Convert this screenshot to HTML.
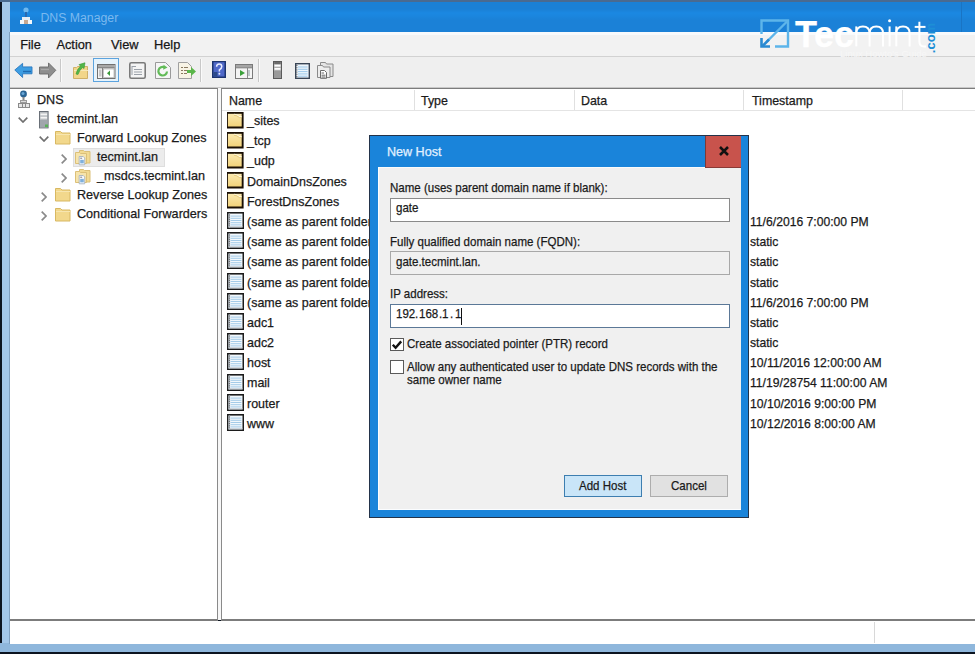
<!DOCTYPE html>
<html><head><meta charset="utf-8">
<style>
*{margin:0;padding:0;box-sizing:border-box}
html,body{width:975px;height:654px;overflow:hidden;background:#0c1420}
body{position:relative;font-family:"Liberation Sans",sans-serif;color:#000}
.a{position:absolute;display:block}
.t{position:absolute;white-space:nowrap;-webkit-text-stroke:0.25px currentColor}
</style></head><body>
<div class="a" style="left:2px;top:0;width:8px;height:652px;background:#a3c7e9"></div><div class="a" style="left:0;top:643px;width:975px;height:9px;background:#8fb7dc"></div><div class="a" style="left:9px;top:32px;width:1px;height:612px;background:#7f9fbf"></div><div class="a" style="left:0;top:0;width:975px;height:2px;background:#4a6a90"></div><div class="a" style="left:10px;top:2px;width:965px;height:30px;background:linear-gradient(#1b80d5 0px,#1b80d5 7px,#1b88e2 11px,#1b86de 14px,#1b81d7 18px,#1b81d7 30px)"></div><div class="a" style="left:961px;top:2px;width:1px;height:30px;background:#1974c4"></div><svg class="a" style="left:18px;top:6px" width="16" height="20" viewBox="0 0 16 20">
<circle cx="8" cy="4" r="2.6" fill="#6fb8ee"/>
<rect x="7" y="6" width="2" height="5" fill="#2a6ab0"/>
<rect x="4" y="11" width="8" height="3" fill="#e8eef4"/>
<rect x="2" y="14" width="12" height="4" fill="#f4f8fb"/>
<rect x="6" y="14" width="4" height="4" fill="#c8a890"/>
</svg><div class="t " style="left:40.4px;top:9.74px;font-size:12.3px;line-height:16px;color:#7ab9ef;-webkit-text-stroke:0">DNS Manager</div>
<div class="a" style="left:10px;top:32px;width:965px;height:25px;background:#f2f2f2"></div><div class="a" style="left:10px;top:32px;width:965px;height:3px;background:#f8fafc"></div><div class="a" style="left:10px;top:56px;width:965px;height:1px;background:#d2d2d2"></div><div class="t " style="left:20.2px;top:36.86px;font-size:12.8px;line-height:16px;color:#161616;">File</div>
<div class="t " style="left:56.4px;top:36.86px;font-size:12.8px;line-height:16px;color:#161616;">Action</div>
<div class="t " style="left:111px;top:36.86px;font-size:12.8px;line-height:16px;color:#161616;">View</div>
<div class="t " style="left:154px;top:36.86px;font-size:12.8px;line-height:16px;color:#161616;">Help</div>
<div class="a" style="left:10px;top:57px;width:965px;height:31px;background:#efefef"></div><div class="a" style="left:60px;top:59px;width:1px;height:23px;background:#c8c8c8"></div><div class="a" style="left:61px;top:59px;width:1px;height:23px;background:#fafafa"></div><div class="a" style="left:200px;top:59px;width:1px;height:23px;background:#c8c8c8"></div><div class="a" style="left:201px;top:59px;width:1px;height:23px;background:#fafafa"></div><div class="a" style="left:258px;top:59px;width:1px;height:23px;background:#c8c8c8"></div><div class="a" style="left:259px;top:59px;width:1px;height:23px;background:#fafafa"></div><div class="a" style="left:93px;top:58px;width:26px;height:24px;background:#e6f3fc;border:1.6px solid #5ca3de"></div><svg class="a" style="left:14px;top:62px" width="19" height="17" viewBox="0 0 19 17">
<path d="M0.8 8 L8.6 1.4 V4.9 H18 V11.8 H8.6 V15.5 Z" fill="#3d9de2" stroke="#2a78c0" stroke-width="0.9" stroke-linejoin="round"/>
<path d="M9 9.5 H17" stroke="#1f6ab0" stroke-width="1.4"/>
</svg><svg class="a" style="left:39px;top:62px" width="19" height="17" viewBox="0 0 19 17">
<path d="M16.8 8.3 L9.5 0.9 V5 H0.5 V12 H9.5 V16 Z" fill="#8e8e8e" stroke="#6a6a6a" stroke-width="0.9" stroke-linejoin="round"/>
<path d="M2 7.5 H10" stroke="#a8a8a8" stroke-width="1.2"/>
</svg><svg class="a" style="left:73px;top:62px" width="16" height="17" viewBox="0 0 16 17">
<path d="M0.5 5.5 h3 l1 -1 h10 v12 h-14z" fill="#f2d68a" stroke="#cfb068"/>
<path d="M1 8.5 h14" stroke="#f8e8b8"/>
<path d="M3 12 Q4 7 7.5 4.2 L6 2.6 L12 0.8 L11 6.6 L9.6 5.4 Q6.5 8 5 12.5z" fill="#52b548" stroke="#3a9a34" stroke-width="0.6"/>
</svg><svg class="a" style="left:97px;top:64px" width="19" height="15" viewBox="0 0 19 15">
<rect x="0.5" y="0.5" width="17.5" height="14" fill="#f4f4f4" stroke="#707070"/>
<rect x="1" y="1" width="16.5" height="2.6" fill="#a8a8a8"/>
<path d="M1 3.8 h16.5" stroke="#707070"/>
<path d="M5.5 4 v10" stroke="#808080"/>
<rect x="2" y="5.5" width="2.5" height="7" fill="#c8c8c8"/>
<rect x="6.5" y="5" width="10.5" height="8.5" fill="#fff" stroke="#a0a0a0" stroke-width="0.6"/>
<path d="M13 6.5 L10 9.2 L13 12z" fill="#3a9a3a"/>
</svg><svg class="a" style="left:129px;top:62px" width="17" height="17" viewBox="0 0 17 17">
<rect x="0.8" y="0.8" width="15.4" height="15.4" rx="1.5" fill="#f4f4f4" stroke="#7a7a7a" stroke-width="1.6"/>
<path d="M3 4.5 h4 M5 7.5 h8 M5 10 h8 M5 12.5 h8" stroke="#9aa0a8" stroke-width="1.2"/>
<path d="M3 4 v9" stroke="#9aa0a8"/>
</svg><svg class="a" style="left:155px;top:62px" width="16" height="17" viewBox="0 0 16 17">
<path d="M0.5 0.5 h10 l5 5 v11 h-15z" fill="#f6f6f6" stroke="#9a9a9a"/>
<path d="M12 9.5 A4.3 4.3 0 1 1 9.5 5.3" fill="none" stroke="#62bb58" stroke-width="2.2"/>
<path d="M8.5 2.8 L12.5 5.6 L8.2 7.8z" fill="#62bb58"/>
</svg><svg class="a" style="left:178px;top:62px" width="18" height="17" viewBox="0 0 18 17">
<path d="M0.5 0.5 h9 l4 4 v12 h-13z" fill="#f8f4e6" stroke="#a0a0a0"/>
<path d="M3 5.5 h2 M6 5.5 h4 M3 8.5 h2 M6 8.5 h4 M3 11.5 h2 M6 11.5 h3" stroke="#8a7a60" stroke-width="1.2"/>
<path d="M9 8 h4 v-3 l5 4.5 l-5 4.5 v-3 h-4z" fill="#5ab64a"/>
</svg><svg class="a" style="left:212px;top:61px" width="14" height="18" viewBox="0 0 14 18">
<rect x="0" y="0" width="14" height="17" fill="#1c3470"/>
<rect x="1.5" y="1.2" width="11" height="14.3" fill="#4f68c8"/>
<rect x="1.5" y="11" width="4" height="4.5" fill="#2c4a8a"/>
<path d="M4.6 5.8 Q4.6 3 7.2 3 Q9.8 3 9.8 5.6 Q9.8 7.4 7.4 8.8 V10.6" fill="none" stroke="#e8ecff" stroke-width="1.5"/>
<circle cx="7.4" cy="12.8" r="1" fill="#e8ecff"/>
</svg><svg class="a" style="left:235px;top:64px" width="18" height="15" viewBox="0 0 18 15">
<rect x="0.5" y="0.5" width="17" height="14" fill="#f4f4f4" stroke="#7a7a7a"/>
<rect x="1" y="1" width="16" height="2.6" fill="#a6a6a6"/>
<path d="M1 3.8 h16" stroke="#7a7a7a"/>
<path d="M12.5 4 v10" stroke="#8a8a8a"/>
<path d="M5 6 L10 9 L5 12z" fill="#3aa03a"/>
<path d="M14 6 v6" stroke="#9aa" stroke-width="1.2"/>
</svg><svg class="a" style="left:273px;top:61px" width="9" height="18" viewBox="0 0 9 18">
<rect x="0.5" y="0.5" width="8" height="17" fill="#b0b0b0" stroke="#5a5a5a"/>
<rect x="1.2" y="1.2" width="6.6" height="1.6" fill="#5a5a5a"/>
<rect x="1.5" y="3.8" width="6" height="1.8" fill="#fff"/>
<rect x="1.5" y="7" width="6" height="1.8" fill="#fff"/>
<rect x="1" y="10" width="7" height="7" fill="#9a9a9a"/>
</svg><svg class="a" style="left:294.5px;top:62.5px" width="15" height="16" viewBox="0 0 15 16">
<rect x="0" y="0" width="15" height="16" fill="#3a4656"/>
<rect x="1.4" y="1.4" width="12.2" height="13.2" fill="#eef6fc"/>
<rect x="3" y="3.5" width="9.5" height="1" fill="#9cc8ea"/>
<rect x="3" y="5.8" width="9.5" height="1" fill="#9cc8ea"/>
<rect x="3" y="8.1" width="9.5" height="1" fill="#9cc8ea"/>
<rect x="3" y="10.4" width="9.5" height="1" fill="#9cc8ea"/>
<rect x="3" y="12.7" width="9.5" height="1" fill="#9cc8ea"/>
<path d="M1.9 2 v12" stroke="#444" stroke-width="0.9" stroke-dasharray="1 1.2"/>
</svg><svg class="a" style="left:317px;top:62px" width="17" height="17" viewBox="0 0 17 17">
<path d="M3.5 0.5 h5 l1 1.5 h6.5 v12.5 h-12.5z" fill="#e4e4e4" stroke="#8a8a8a"/>
<path d="M0.5 3.5 h5 l1 1.5 h6.5 v10.5 h-12.5z" fill="#ededed" stroke="#8a8a8a"/>
<path d="M3.5 8.5 h4 l2 2 v5.8 h-6z" fill="#fff" stroke="#6a6a6a"/>
<path d="M4.5 11 h2.5 M4.5 13.2 h4 M4.5 15 h4" stroke="#555" stroke-width="0.9"/>
</svg><div class="a" style="left:10px;top:87px;width:965px;height:1px;background:#c8c8c8"></div><div class="a" style="left:10px;top:88px;width:965px;height:532px;background:#f7f7f7"></div><div class="a" style="left:10px;top:88px;width:208px;height:533px;background:#fff;border-top:1.5px solid #7c7c7c;border-right:1.5px solid #8a8a8a;border-bottom:2px solid #7c7c7c"></div><div class="a" style="left:220.5px;top:88px;width:755px;height:533px;background:#fff;border-top:1.5px solid #7c7c7c;border-left:1.5px solid #8a8a8a;border-bottom:2px solid #7c7c7c"></div><div class="a" style="left:73px;top:147.5px;width:92px;height:19px;background:#ececec;border:1px solid #dedede"></div><svg class="a" style="left:17px;top:90px" width="14" height="19" viewBox="0 0 14 19">
<circle cx="6.5" cy="4" r="3.4" fill="#2a6494"/>
<circle cx="6" cy="3.4" r="1.5" fill="#6aa8d8"/>
<rect x="5.5" y="7" width="2" height="3" fill="#888"/>
<rect x="3" y="10" width="7" height="3" fill="#9a9a9a"/>
<rect x="4" y="11" width="5" height="1" fill="#ddd"/>
<rect x="1" y="13" width="12" height="5" fill="#8a8a8a"/>
<rect x="2" y="14" width="10" height="3" fill="#e6e6e6"/>
<path d="M5.5 14 v3 M8.5 14 v3" stroke="#8a8a8a"/>
</svg><svg class="a" style="left:18px;top:116.5px" width="10" height="6" viewBox="0 0 10 6"><path d="M0.7 0.7 L5 5 L9.3 0.7" fill="none" stroke="#707070" stroke-width="1.7"/></svg><svg class="a" style="left:39px;top:110.5px" width="10" height="18" viewBox="0 0 10 18">
<rect x="0.5" y="0.5" width="8.6" height="16.4" fill="#b8bcc0" stroke="#6a7078"/>
<rect x="1.5" y="2.5" width="6.6" height="1.8" fill="#f4f4f4"/>
<rect x="1.5" y="5.8" width="6.6" height="1.8" fill="#f4f4f4"/>
<rect x="1" y="9" width="7.6" height="7.4" fill="#a0a6ac"/>
<rect x="6" y="13.5" width="3" height="2.6" fill="#58b058"/>
</svg><svg class="a" style="left:38.5px;top:136px" width="10" height="6" viewBox="0 0 10 6"><path d="M0.7 0.7 L5 5 L9.3 0.7" fill="none" stroke="#707070" stroke-width="1.7"/></svg><svg class="a" style="left:55px;top:131.4px" width="16" height="14" viewBox="0 0 16 14">
<path d="M0.5 0.5 h5 l1.5 1.5 h8 v11 h-14.5z" fill="#f2d88c" stroke="#d8b862" stroke-width="1"/>
<path d="M1 3.5 h14" stroke="#f7e6b0" stroke-width="1"/>
</svg><svg class="a" style="left:60.5px;top:154px" width="6" height="10" viewBox="0 0 6 10"><path d="M0.7 0.7 L5 5 L0.7 9.3" fill="none" stroke="#8a8a8a" stroke-width="1.7"/></svg><svg class="a" style="left:75px;top:150px" width="16" height="16" viewBox="0 0 16 16">
<path d="M4.5 0.5 h4 l1 1 h5.5 v11.5 h-10.5z" fill="#f2da92" stroke="#dcc078"/>
<path d="M0.5 2.5 h4 l1 1 h6 v10 h-11z" fill="#f6e4ac" stroke="#dcc078"/>
<path d="M4.2 6.5 h4 l1.5 1.5 v6.8 h-5.5z" fill="#fff" stroke="#9aaabb" stroke-width="0.8"/>
<rect x="5.2" y="9.8" width="3.6" height="3.6" fill="#7fb0dc"/>
<path d="M5.2 8.2 h2" stroke="#556" stroke-width="0.8"/>
</svg><svg class="a" style="left:60.5px;top:173px" width="6" height="10" viewBox="0 0 6 10"><path d="M0.7 0.7 L5 5 L0.7 9.3" fill="none" stroke="#8a8a8a" stroke-width="1.7"/></svg><svg class="a" style="left:75px;top:169px" width="16" height="16" viewBox="0 0 16 16">
<path d="M4.5 0.5 h4 l1 1 h5.5 v11.5 h-10.5z" fill="#f2da92" stroke="#dcc078"/>
<path d="M0.5 2.5 h4 l1 1 h6 v10 h-11z" fill="#f6e4ac" stroke="#dcc078"/>
<path d="M4.2 6.5 h4 l1.5 1.5 v6.8 h-5.5z" fill="#fff" stroke="#9aaabb" stroke-width="0.8"/>
<rect x="5.2" y="9.8" width="3.6" height="3.6" fill="#7fb0dc"/>
<path d="M5.2 8.2 h2" stroke="#556" stroke-width="0.8"/>
</svg><svg class="a" style="left:40.5px;top:192px" width="6" height="10" viewBox="0 0 6 10"><path d="M0.7 0.7 L5 5 L0.7 9.3" fill="none" stroke="#8a8a8a" stroke-width="1.7"/></svg><svg class="a" style="left:55px;top:188.4px" width="16" height="14" viewBox="0 0 16 14">
<path d="M0.5 0.5 h5 l1.5 1.5 h8 v11 h-14.5z" fill="#f2d88c" stroke="#d8b862" stroke-width="1"/>
<path d="M1 3.5 h14" stroke="#f7e6b0" stroke-width="1"/>
</svg><svg class="a" style="left:40.5px;top:211px" width="6" height="10" viewBox="0 0 6 10"><path d="M0.7 0.7 L5 5 L0.7 9.3" fill="none" stroke="#8a8a8a" stroke-width="1.7"/></svg><svg class="a" style="left:55px;top:207.5px" width="16" height="14" viewBox="0 0 16 14">
<path d="M0.5 0.5 h5 l1.5 1.5 h8 v11 h-14.5z" fill="#f2d88c" stroke="#d8b862" stroke-width="1"/>
<path d="M1 3.5 h14" stroke="#f7e6b0" stroke-width="1"/>
</svg><div class="t " style="left:37.3px;top:91.60px;font-size:13px;line-height:16px;color:#1a1a1a;transform:scaleX(0.97);transform-origin:0 0">DNS</div>
<div class="t " style="left:57.2px;top:110.68px;font-size:13px;line-height:16px;color:#1a1a1a;transform:scaleX(0.97);transform-origin:0 0">tecmint.lan</div>
<div class="t " style="left:77.1px;top:129.76px;font-size:13px;line-height:16px;color:#1a1a1a;transform:scaleX(0.97);transform-origin:0 0">Forward Lookup Zones</div>
<div class="t " style="left:97.2px;top:148.84px;font-size:13px;line-height:16px;color:#1a1a1a;transform:scaleX(0.97);transform-origin:0 0">tecmint.lan</div>
<div class="t " style="left:97.2px;top:167.92px;font-size:13px;line-height:16px;color:#1a1a1a;transform:scaleX(0.97);transform-origin:0 0">_msdcs.tecmint.lan</div>
<div class="t " style="left:77.1px;top:187.00px;font-size:13px;line-height:16px;color:#1a1a1a;transform:scaleX(0.97);transform-origin:0 0">Reverse Lookup Zones</div>
<div class="t " style="left:77.1px;top:206.08px;font-size:13px;line-height:16px;color:#1a1a1a;transform:scaleX(0.97);transform-origin:0 0">Conditional Forwarders</div>
<div class="a" style="left:222px;top:109.5px;width:753px;height:1px;background:#e4e4e4"></div><div class="a" style="left:414px;top:90px;width:1px;height:20px;background:#e0e0e0"></div><div class="a" style="left:573.5px;top:90px;width:1px;height:20px;background:#e0e0e0"></div><div class="a" style="left:743.3px;top:90px;width:1px;height:20px;background:#e0e0e0"></div><div class="a" style="left:901.5px;top:90px;width:1px;height:20px;background:#e0e0e0"></div><div class="t " style="left:229px;top:92.96px;font-size:12.8px;line-height:16px;color:#1a1a1a;transform:scaleX(0.97);transform-origin:0 0">Name</div>
<div class="t " style="left:421px;top:92.96px;font-size:12.8px;line-height:16px;color:#1a1a1a;transform:scaleX(0.97);transform-origin:0 0">Type</div>
<div class="t " style="left:580.5px;top:92.96px;font-size:12.8px;line-height:16px;color:#1a1a1a;transform:scaleX(0.97);transform-origin:0 0">Data</div>
<div class="t " style="left:751.5px;top:92.96px;font-size:12.8px;line-height:16px;color:#1a1a1a;transform:scaleX(0.97);transform-origin:0 0">Timestamp</div>
<svg class="a" style="left:227.2px;top:111.5px" width="17" height="17" viewBox="0 0 17 17">
<defs><linearGradient id="fg" x1="0" y1="0" x2="0" y2="1"><stop offset="0" stop-color="#fbe9b0"/><stop offset="1" stop-color="#f3d37a"/></linearGradient></defs>
<rect x="0" y="0" width="16.6" height="16.5" fill="#1a0f04"/>
<rect x="0.9" y="1.8" width="13.8" height="12.7" fill="url(#fg)"/>
<path d="M7 2.2 Q10 2.2 12.5 4.6 H14.6" fill="none" stroke="#fff8e0" stroke-width="1.1"/>
<path d="M7 3.2 Q10 3.4 12.5 5.6 H14.6" fill="none" stroke="#d8b860" stroke-width="0.6"/>
</svg><div class="t " style="left:247px;top:113.06px;font-size:12.8px;line-height:16px;color:#1a1a1a;transform:scaleX(0.975);transform-origin:0 0">_sites</div>
<svg class="a" style="left:227.2px;top:131.68px" width="17" height="17" viewBox="0 0 17 17">
<defs><linearGradient id="fg" x1="0" y1="0" x2="0" y2="1"><stop offset="0" stop-color="#fbe9b0"/><stop offset="1" stop-color="#f3d37a"/></linearGradient></defs>
<rect x="0" y="0" width="16.6" height="16.5" fill="#1a0f04"/>
<rect x="0.9" y="1.8" width="13.8" height="12.7" fill="url(#fg)"/>
<path d="M7 2.2 Q10 2.2 12.5 4.6 H14.6" fill="none" stroke="#fff8e0" stroke-width="1.1"/>
<path d="M7 3.2 Q10 3.4 12.5 5.6 H14.6" fill="none" stroke="#d8b860" stroke-width="0.6"/>
</svg><div class="t " style="left:247px;top:133.24px;font-size:12.8px;line-height:16px;color:#1a1a1a;transform:scaleX(0.975);transform-origin:0 0">_tcp</div>
<svg class="a" style="left:227.2px;top:151.86px" width="17" height="17" viewBox="0 0 17 17">
<defs><linearGradient id="fg" x1="0" y1="0" x2="0" y2="1"><stop offset="0" stop-color="#fbe9b0"/><stop offset="1" stop-color="#f3d37a"/></linearGradient></defs>
<rect x="0" y="0" width="16.6" height="16.5" fill="#1a0f04"/>
<rect x="0.9" y="1.8" width="13.8" height="12.7" fill="url(#fg)"/>
<path d="M7 2.2 Q10 2.2 12.5 4.6 H14.6" fill="none" stroke="#fff8e0" stroke-width="1.1"/>
<path d="M7 3.2 Q10 3.4 12.5 5.6 H14.6" fill="none" stroke="#d8b860" stroke-width="0.6"/>
</svg><div class="t " style="left:247px;top:153.42px;font-size:12.8px;line-height:16px;color:#1a1a1a;transform:scaleX(0.975);transform-origin:0 0">_udp</div>
<svg class="a" style="left:227.2px;top:172.04px" width="17" height="17" viewBox="0 0 17 17">
<defs><linearGradient id="fg" x1="0" y1="0" x2="0" y2="1"><stop offset="0" stop-color="#fbe9b0"/><stop offset="1" stop-color="#f3d37a"/></linearGradient></defs>
<rect x="0" y="0" width="16.6" height="16.5" fill="#1a0f04"/>
<rect x="0.9" y="1.8" width="13.8" height="12.7" fill="url(#fg)"/>
<path d="M7 2.2 Q10 2.2 12.5 4.6 H14.6" fill="none" stroke="#fff8e0" stroke-width="1.1"/>
<path d="M7 3.2 Q10 3.4 12.5 5.6 H14.6" fill="none" stroke="#d8b860" stroke-width="0.6"/>
</svg><div class="t " style="left:247px;top:173.60px;font-size:12.8px;line-height:16px;color:#1a1a1a;transform:scaleX(0.975);transform-origin:0 0">DomainDnsZones</div>
<svg class="a" style="left:227.2px;top:192.22px" width="17" height="17" viewBox="0 0 17 17">
<defs><linearGradient id="fg" x1="0" y1="0" x2="0" y2="1"><stop offset="0" stop-color="#fbe9b0"/><stop offset="1" stop-color="#f3d37a"/></linearGradient></defs>
<rect x="0" y="0" width="16.6" height="16.5" fill="#1a0f04"/>
<rect x="0.9" y="1.8" width="13.8" height="12.7" fill="url(#fg)"/>
<path d="M7 2.2 Q10 2.2 12.5 4.6 H14.6" fill="none" stroke="#fff8e0" stroke-width="1.1"/>
<path d="M7 3.2 Q10 3.4 12.5 5.6 H14.6" fill="none" stroke="#d8b860" stroke-width="0.6"/>
</svg><div class="t " style="left:247px;top:193.78px;font-size:12.8px;line-height:16px;color:#1a1a1a;transform:scaleX(0.975);transform-origin:0 0">ForestDnsZones</div>
<svg class="a" style="left:227.2px;top:212.1px" width="17" height="17" viewBox="0 0 17 17">
<rect x="0" y="0" width="17" height="17" fill="#1c1c1c"/>
<rect x="1.5" y="1.6" width="14" height="13.8" fill="#f2f8fc"/>
<rect x="3.6" y="3.6" width="10.8" height="1" fill="#a4cbe8"/><rect x="3.6" y="5.8" width="10.8" height="1" fill="#a4cbe8"/><rect x="3.6" y="8" width="10.8" height="1" fill="#a4cbe8"/><rect x="3.6" y="10.2" width="10.8" height="1" fill="#a4cbe8"/><rect x="3.6" y="12.4" width="10.8" height="1" fill="#a4cbe8"/>
<rect x="1.5" y="1.6" width="1.6" height="13.8" fill="#b4bcc4"/>
<path d="M2.3 2.5 v12" stroke="#4a4a4a" stroke-width="0.9" stroke-dasharray="1 1.2"/>
<rect x="1.5" y="14.3" width="14" height="1.1" fill="#c0c8d0"/>
</svg><div class="t " style="left:247px;top:213.96px;font-size:12.8px;line-height:16px;color:#1a1a1a;transform:scaleX(0.975);transform-origin:0 0">(same as parent folder)</div>
<div class="t " style="left:750.2px;top:213.96px;font-size:12.8px;line-height:16px;color:#1a1a1a;transform:scaleX(0.95);transform-origin:0 0">11/6/2016 7:00:00 PM</div>
<svg class="a" style="left:227.2px;top:232.27999999999997px" width="17" height="17" viewBox="0 0 17 17">
<rect x="0" y="0" width="17" height="17" fill="#1c1c1c"/>
<rect x="1.5" y="1.6" width="14" height="13.8" fill="#f2f8fc"/>
<rect x="3.6" y="3.6" width="10.8" height="1" fill="#a4cbe8"/><rect x="3.6" y="5.8" width="10.8" height="1" fill="#a4cbe8"/><rect x="3.6" y="8" width="10.8" height="1" fill="#a4cbe8"/><rect x="3.6" y="10.2" width="10.8" height="1" fill="#a4cbe8"/><rect x="3.6" y="12.4" width="10.8" height="1" fill="#a4cbe8"/>
<rect x="1.5" y="1.6" width="1.6" height="13.8" fill="#b4bcc4"/>
<path d="M2.3 2.5 v12" stroke="#4a4a4a" stroke-width="0.9" stroke-dasharray="1 1.2"/>
<rect x="1.5" y="14.3" width="14" height="1.1" fill="#c0c8d0"/>
</svg><div class="t " style="left:247px;top:234.14px;font-size:12.8px;line-height:16px;color:#1a1a1a;transform:scaleX(0.975);transform-origin:0 0">(same as parent folder)</div>
<div class="t " style="left:750.2px;top:234.14px;font-size:12.8px;line-height:16px;color:#1a1a1a;transform:scaleX(0.95);transform-origin:0 0">static</div>
<svg class="a" style="left:227.2px;top:252.45999999999998px" width="17" height="17" viewBox="0 0 17 17">
<rect x="0" y="0" width="17" height="17" fill="#1c1c1c"/>
<rect x="1.5" y="1.6" width="14" height="13.8" fill="#f2f8fc"/>
<rect x="3.6" y="3.6" width="10.8" height="1" fill="#a4cbe8"/><rect x="3.6" y="5.8" width="10.8" height="1" fill="#a4cbe8"/><rect x="3.6" y="8" width="10.8" height="1" fill="#a4cbe8"/><rect x="3.6" y="10.2" width="10.8" height="1" fill="#a4cbe8"/><rect x="3.6" y="12.4" width="10.8" height="1" fill="#a4cbe8"/>
<rect x="1.5" y="1.6" width="1.6" height="13.8" fill="#b4bcc4"/>
<path d="M2.3 2.5 v12" stroke="#4a4a4a" stroke-width="0.9" stroke-dasharray="1 1.2"/>
<rect x="1.5" y="14.3" width="14" height="1.1" fill="#c0c8d0"/>
</svg><div class="t " style="left:247px;top:254.32px;font-size:12.8px;line-height:16px;color:#1a1a1a;transform:scaleX(0.975);transform-origin:0 0">(same as parent folder)</div>
<div class="t " style="left:750.2px;top:254.32px;font-size:12.8px;line-height:16px;color:#1a1a1a;transform:scaleX(0.95);transform-origin:0 0">static</div>
<svg class="a" style="left:227.2px;top:272.64px" width="17" height="17" viewBox="0 0 17 17">
<rect x="0" y="0" width="17" height="17" fill="#1c1c1c"/>
<rect x="1.5" y="1.6" width="14" height="13.8" fill="#f2f8fc"/>
<rect x="3.6" y="3.6" width="10.8" height="1" fill="#a4cbe8"/><rect x="3.6" y="5.8" width="10.8" height="1" fill="#a4cbe8"/><rect x="3.6" y="8" width="10.8" height="1" fill="#a4cbe8"/><rect x="3.6" y="10.2" width="10.8" height="1" fill="#a4cbe8"/><rect x="3.6" y="12.4" width="10.8" height="1" fill="#a4cbe8"/>
<rect x="1.5" y="1.6" width="1.6" height="13.8" fill="#b4bcc4"/>
<path d="M2.3 2.5 v12" stroke="#4a4a4a" stroke-width="0.9" stroke-dasharray="1 1.2"/>
<rect x="1.5" y="14.3" width="14" height="1.1" fill="#c0c8d0"/>
</svg><div class="t " style="left:247px;top:274.50px;font-size:12.8px;line-height:16px;color:#1a1a1a;transform:scaleX(0.975);transform-origin:0 0">(same as parent folder)</div>
<div class="t " style="left:750.2px;top:274.50px;font-size:12.8px;line-height:16px;color:#1a1a1a;transform:scaleX(0.95);transform-origin:0 0">static</div>
<svg class="a" style="left:227.2px;top:292.82px" width="17" height="17" viewBox="0 0 17 17">
<rect x="0" y="0" width="17" height="17" fill="#1c1c1c"/>
<rect x="1.5" y="1.6" width="14" height="13.8" fill="#f2f8fc"/>
<rect x="3.6" y="3.6" width="10.8" height="1" fill="#a4cbe8"/><rect x="3.6" y="5.8" width="10.8" height="1" fill="#a4cbe8"/><rect x="3.6" y="8" width="10.8" height="1" fill="#a4cbe8"/><rect x="3.6" y="10.2" width="10.8" height="1" fill="#a4cbe8"/><rect x="3.6" y="12.4" width="10.8" height="1" fill="#a4cbe8"/>
<rect x="1.5" y="1.6" width="1.6" height="13.8" fill="#b4bcc4"/>
<path d="M2.3 2.5 v12" stroke="#4a4a4a" stroke-width="0.9" stroke-dasharray="1 1.2"/>
<rect x="1.5" y="14.3" width="14" height="1.1" fill="#c0c8d0"/>
</svg><div class="t " style="left:247px;top:294.68px;font-size:12.8px;line-height:16px;color:#1a1a1a;transform:scaleX(0.975);transform-origin:0 0">(same as parent folder)</div>
<div class="t " style="left:750.2px;top:294.68px;font-size:12.8px;line-height:16px;color:#1a1a1a;transform:scaleX(0.95);transform-origin:0 0">11/6/2016 7:00:00 PM</div>
<svg class="a" style="left:227.2px;top:313.0px" width="17" height="17" viewBox="0 0 17 17">
<rect x="0" y="0" width="17" height="17" fill="#1c1c1c"/>
<rect x="1.5" y="1.6" width="14" height="13.8" fill="#f2f8fc"/>
<rect x="3.6" y="3.6" width="10.8" height="1" fill="#a4cbe8"/><rect x="3.6" y="5.8" width="10.8" height="1" fill="#a4cbe8"/><rect x="3.6" y="8" width="10.8" height="1" fill="#a4cbe8"/><rect x="3.6" y="10.2" width="10.8" height="1" fill="#a4cbe8"/><rect x="3.6" y="12.4" width="10.8" height="1" fill="#a4cbe8"/>
<rect x="1.5" y="1.6" width="1.6" height="13.8" fill="#b4bcc4"/>
<path d="M2.3 2.5 v12" stroke="#4a4a4a" stroke-width="0.9" stroke-dasharray="1 1.2"/>
<rect x="1.5" y="14.3" width="14" height="1.1" fill="#c0c8d0"/>
</svg><div class="t " style="left:247px;top:314.86px;font-size:12.8px;line-height:16px;color:#1a1a1a;transform:scaleX(0.975);transform-origin:0 0">adc1</div>
<div class="t " style="left:750.2px;top:314.86px;font-size:12.8px;line-height:16px;color:#1a1a1a;transform:scaleX(0.95);transform-origin:0 0">static</div>
<svg class="a" style="left:227.2px;top:333.18px" width="17" height="17" viewBox="0 0 17 17">
<rect x="0" y="0" width="17" height="17" fill="#1c1c1c"/>
<rect x="1.5" y="1.6" width="14" height="13.8" fill="#f2f8fc"/>
<rect x="3.6" y="3.6" width="10.8" height="1" fill="#a4cbe8"/><rect x="3.6" y="5.8" width="10.8" height="1" fill="#a4cbe8"/><rect x="3.6" y="8" width="10.8" height="1" fill="#a4cbe8"/><rect x="3.6" y="10.2" width="10.8" height="1" fill="#a4cbe8"/><rect x="3.6" y="12.4" width="10.8" height="1" fill="#a4cbe8"/>
<rect x="1.5" y="1.6" width="1.6" height="13.8" fill="#b4bcc4"/>
<path d="M2.3 2.5 v12" stroke="#4a4a4a" stroke-width="0.9" stroke-dasharray="1 1.2"/>
<rect x="1.5" y="14.3" width="14" height="1.1" fill="#c0c8d0"/>
</svg><div class="t " style="left:247px;top:335.04px;font-size:12.8px;line-height:16px;color:#1a1a1a;transform:scaleX(0.975);transform-origin:0 0">adc2</div>
<div class="t " style="left:750.2px;top:335.04px;font-size:12.8px;line-height:16px;color:#1a1a1a;transform:scaleX(0.95);transform-origin:0 0">static</div>
<svg class="a" style="left:227.2px;top:353.35999999999996px" width="17" height="17" viewBox="0 0 17 17">
<rect x="0" y="0" width="17" height="17" fill="#1c1c1c"/>
<rect x="1.5" y="1.6" width="14" height="13.8" fill="#f2f8fc"/>
<rect x="3.6" y="3.6" width="10.8" height="1" fill="#a4cbe8"/><rect x="3.6" y="5.8" width="10.8" height="1" fill="#a4cbe8"/><rect x="3.6" y="8" width="10.8" height="1" fill="#a4cbe8"/><rect x="3.6" y="10.2" width="10.8" height="1" fill="#a4cbe8"/><rect x="3.6" y="12.4" width="10.8" height="1" fill="#a4cbe8"/>
<rect x="1.5" y="1.6" width="1.6" height="13.8" fill="#b4bcc4"/>
<path d="M2.3 2.5 v12" stroke="#4a4a4a" stroke-width="0.9" stroke-dasharray="1 1.2"/>
<rect x="1.5" y="14.3" width="14" height="1.1" fill="#c0c8d0"/>
</svg><div class="t " style="left:247px;top:355.22px;font-size:12.8px;line-height:16px;color:#1a1a1a;transform:scaleX(0.975);transform-origin:0 0">host</div>
<div class="t " style="left:750.2px;top:355.22px;font-size:12.8px;line-height:16px;color:#1a1a1a;transform:scaleX(0.95);transform-origin:0 0">10/11/2016 12:00:00 AM</div>
<svg class="a" style="left:227.2px;top:373.53999999999996px" width="17" height="17" viewBox="0 0 17 17">
<rect x="0" y="0" width="17" height="17" fill="#1c1c1c"/>
<rect x="1.5" y="1.6" width="14" height="13.8" fill="#f2f8fc"/>
<rect x="3.6" y="3.6" width="10.8" height="1" fill="#a4cbe8"/><rect x="3.6" y="5.8" width="10.8" height="1" fill="#a4cbe8"/><rect x="3.6" y="8" width="10.8" height="1" fill="#a4cbe8"/><rect x="3.6" y="10.2" width="10.8" height="1" fill="#a4cbe8"/><rect x="3.6" y="12.4" width="10.8" height="1" fill="#a4cbe8"/>
<rect x="1.5" y="1.6" width="1.6" height="13.8" fill="#b4bcc4"/>
<path d="M2.3 2.5 v12" stroke="#4a4a4a" stroke-width="0.9" stroke-dasharray="1 1.2"/>
<rect x="1.5" y="14.3" width="14" height="1.1" fill="#c0c8d0"/>
</svg><div class="t " style="left:247px;top:375.40px;font-size:12.8px;line-height:16px;color:#1a1a1a;transform:scaleX(0.975);transform-origin:0 0">mail</div>
<div class="t " style="left:750.2px;top:375.40px;font-size:12.8px;line-height:16px;color:#1a1a1a;transform:scaleX(0.95);transform-origin:0 0">11/19/28754 11:00:00 AM</div>
<svg class="a" style="left:227.2px;top:393.71999999999997px" width="17" height="17" viewBox="0 0 17 17">
<rect x="0" y="0" width="17" height="17" fill="#1c1c1c"/>
<rect x="1.5" y="1.6" width="14" height="13.8" fill="#f2f8fc"/>
<rect x="3.6" y="3.6" width="10.8" height="1" fill="#a4cbe8"/><rect x="3.6" y="5.8" width="10.8" height="1" fill="#a4cbe8"/><rect x="3.6" y="8" width="10.8" height="1" fill="#a4cbe8"/><rect x="3.6" y="10.2" width="10.8" height="1" fill="#a4cbe8"/><rect x="3.6" y="12.4" width="10.8" height="1" fill="#a4cbe8"/>
<rect x="1.5" y="1.6" width="1.6" height="13.8" fill="#b4bcc4"/>
<path d="M2.3 2.5 v12" stroke="#4a4a4a" stroke-width="0.9" stroke-dasharray="1 1.2"/>
<rect x="1.5" y="14.3" width="14" height="1.1" fill="#c0c8d0"/>
</svg><div class="t " style="left:247px;top:395.58px;font-size:12.8px;line-height:16px;color:#1a1a1a;transform:scaleX(0.975);transform-origin:0 0">router</div>
<div class="t " style="left:750.2px;top:395.58px;font-size:12.8px;line-height:16px;color:#1a1a1a;transform:scaleX(0.95);transform-origin:0 0">10/10/2016 9:00:00 PM</div>
<svg class="a" style="left:227.2px;top:413.9px" width="17" height="17" viewBox="0 0 17 17">
<rect x="0" y="0" width="17" height="17" fill="#1c1c1c"/>
<rect x="1.5" y="1.6" width="14" height="13.8" fill="#f2f8fc"/>
<rect x="3.6" y="3.6" width="10.8" height="1" fill="#a4cbe8"/><rect x="3.6" y="5.8" width="10.8" height="1" fill="#a4cbe8"/><rect x="3.6" y="8" width="10.8" height="1" fill="#a4cbe8"/><rect x="3.6" y="10.2" width="10.8" height="1" fill="#a4cbe8"/><rect x="3.6" y="12.4" width="10.8" height="1" fill="#a4cbe8"/>
<rect x="1.5" y="1.6" width="1.6" height="13.8" fill="#b4bcc4"/>
<path d="M2.3 2.5 v12" stroke="#4a4a4a" stroke-width="0.9" stroke-dasharray="1 1.2"/>
<rect x="1.5" y="14.3" width="14" height="1.1" fill="#c0c8d0"/>
</svg><div class="t " style="left:247px;top:415.76px;font-size:12.8px;line-height:16px;color:#1a1a1a;transform:scaleX(0.975);transform-origin:0 0">www</div>
<div class="t " style="left:750.2px;top:415.76px;font-size:12.8px;line-height:16px;color:#1a1a1a;transform:scaleX(0.95);transform-origin:0 0">10/12/2016 8:00:00 AM</div>
<div class="a" style="left:10px;top:621px;width:965px;height:22.5px;background:#fff"></div><div class="a" style="left:874px;top:622px;width:1px;height:21px;background:#d8d8d8"></div><div class="a" style="left:369px;top:135px;width:380px;height:383px;background:#1a84da;border:1px solid #23334a"></div><div class="a" style="left:378px;top:167px;width:362.5px;height:342.5px;background:#f0f0f0;border-left:1px solid #fbfdff;border-bottom:1px solid #fbfdff;border-top:1px solid #fafafa"></div><div class="a" style="left:705px;top:136px;width:35.5px;height:31.5px;background:#c8534c;border-left:1px solid #7a3a38;border-bottom:1px solid #8a3a36"></div><svg class="a" style="left:719px;top:146px" width="10" height="10" viewBox="0 0 10 10"><path d="M1 1 L9 9 M9 1 L1 9" stroke="#111" stroke-width="2.5"/></svg><div class="t " style="left:386.9px;top:144.33px;font-size:12.6px;line-height:16px;color:#e2f1ff;">New Host</div>
<div class="t " style="left:389.5px;top:179.56px;font-size:12.8px;line-height:16px;color:#1a1a1a;transform:scaleX(0.9);transform-origin:0 0;">Name (uses parent domain name if blank):</div>
<div class="a" style="left:390px;top:197.5px;width:340px;height:24.5px;background:#fff;border:1px solid #8a8a8a"></div><div class="t " style="left:395.7px;top:200.06px;font-size:12.8px;line-height:16px;color:#1a1a1a;transform:scaleX(0.9);transform-origin:0 0;">gate</div>
<div class="t " style="left:389.5px;top:233.56px;font-size:12.8px;line-height:16px;color:#1a1a1a;transform:scaleX(0.9);transform-origin:0 0;">Fully qualified domain name (FQDN):</div>
<div class="a" style="left:390px;top:250.5px;width:340px;height:24px;background:#f0f0f0;border:1px solid #a8a8a8"></div><div class="t " style="left:395.7px;top:254.06px;font-size:12.8px;line-height:16px;color:#1a1a1a;transform:scaleX(0.9);transform-origin:0 0;">gate.tecmint.lan.</div>
<div class="t " style="left:389.5px;top:286.26px;font-size:12.8px;line-height:16px;color:#1a1a1a;transform:scaleX(0.9);transform-origin:0 0;">IP address:</div>
<div class="a" style="left:390px;top:304px;width:340px;height:23.5px;background:#fff;border:1px solid #5b7897"></div><div class="t " style="left:396px;top:306.06px;font-size:12.8px;line-height:16px;color:#1a1a1a;transform:scaleX(0.9);transform-origin:0 0;">192</div>
<div class="t " style="left:414.5px;top:306.06px;font-size:12.8px;line-height:16px;color:#1a1a1a;transform:scaleX(0.9);transform-origin:0 0;">.</div>
<div class="t " style="left:418.5px;top:306.06px;font-size:12.8px;line-height:16px;color:#1a1a1a;transform:scaleX(0.9);transform-origin:0 0;">168</div>
<div class="t " style="left:438.5px;top:306.06px;font-size:12.8px;line-height:16px;color:#1a1a1a;transform:scaleX(0.9);transform-origin:0 0;">.</div>
<div class="t " style="left:441.5px;top:306.06px;font-size:12.8px;line-height:16px;color:#1a1a1a;transform:scaleX(0.9);transform-origin:0 0;">1</div>
<div class="t " style="left:449.5px;top:306.06px;font-size:12.8px;line-height:16px;color:#1a1a1a;transform:scaleX(0.9);transform-origin:0 0;">.</div>
<div class="t " style="left:454.5px;top:306.06px;font-size:12.8px;line-height:16px;color:#1a1a1a;transform:scaleX(0.9);transform-origin:0 0;">1</div>
<div class="a" style="left:460.5px;top:307.5px;width:1px;height:17px;background:#111"></div><div class="a" style="left:390px;top:337.5px;width:13.5px;height:13.5px;background:#fff;border:1px solid #5a5a5a"></div><svg class="a" style="left:391px;top:338.5px" width="12" height="12" viewBox="0 0 12 12"><path d="M1.8 5.8 L4.6 8.8 L10.2 2.4" fill="none" stroke="#111" stroke-width="2.4"/></svg><div class="t " style="left:406.6px;top:336.06px;font-size:12.8px;line-height:16px;color:#1a1a1a;transform:scaleX(0.9);transform-origin:0 0;">Create associated pointer (PTR) record</div>
<div class="a" style="left:390px;top:360px;width:13.5px;height:13.5px;background:#fff;border:1px solid #5a5a5a"></div><div class="t " style="left:406.6px;top:358.56px;font-size:12.8px;line-height:16px;color:#1a1a1a;transform:scaleX(0.9);transform-origin:0 0;">Allow any authenticated user to update DNS records with the</div>
<div class="t " style="left:406.6px;top:371.66px;font-size:12.8px;line-height:16px;color:#1a1a1a;transform:scaleX(0.9);transform-origin:0 0;">same owner name</div>
<div class="a" style="left:564px;top:474.5px;width:77.5px;height:22px;background:#c9e5f8;border:1px solid #3d7eb0"></div><div class="t " style="left:579px;top:478.16px;font-size:12.8px;line-height:16px;color:#1a1a1a;transform:scaleX(0.9);transform-origin:0 0;">Add Host</div>
<div class="a" style="left:650px;top:474.5px;width:77.5px;height:22px;background:#e1e1e1;border:1px solid #adadad"></div><div class="t " style="left:670.6px;top:478.16px;font-size:12.8px;line-height:16px;color:#1a1a1a;transform:scaleX(0.9);transform-origin:0 0;">Cancel</div>
<svg class="a" style="left:755px;top:14px" width="190" height="50" viewBox="0 0 190 50">
<path d="M6.5 20 V6.5 H33 V32.5 H20" fill="none" stroke="#5db5ea" stroke-width="2.4"/>
<path d="M32 7.5 L12 27.5" stroke="#5db5ea" stroke-width="2.4"/>
<path d="M14 25.5 L7.5 32" stroke="#2a8ad2" stroke-width="2.6"/>
<path d="M6.5 24 V32.5 H15" fill="none" stroke="#2a8ad2" stroke-width="2.6"/>
</svg><div class="t " style="left:795px;top:12.63px;font-size:36px;line-height:44px;color:#ffffff;font-weight:bold;letter-spacing:-0.2px">Tec</div>
<svg class="a" style="left:850px;top:14px" width="95" height="50" viewBox="0 0 95 50">
<g fill="none" stroke="#ffffff" stroke-width="2">
<path d="M6.3 32.4 V12.4"/>
<path d="M6.3 19 Q6.3 12.4 12.9 12.4 Q19.6 12.4 19.6 19 V32.4"/>
<path d="M19.6 19 Q19.6 12.4 26.3 12.4 Q33 12.4 33 19 V32.4"/>
<path d="M39.6 32.4 V12.4"/>
<path d="M46.3 32.4 V12.4"/>
<path d="M46.3 19 Q46.3 12.4 53 12.4 Q59.6 12.4 59.6 19 V32.4"/>
<path d="M69.4 7.8 V27.5 Q69.4 32.4 74 32.4 H76"/>
<path d="M64.7 12.9 H75.5"/>
</g>
<circle cx="39.6" cy="6.8" r="1.5" fill="#fff"/>
</svg><div class="t" style="left:916px;top:31px;font-size:13px;line-height:14px;color:#1d8fd6;font-weight:bold;-webkit-text-stroke:0;transform:rotate(-90deg);transform-origin:center">.com</div><div class="t " style="left:840px;top:46.21px;font-size:9.5px;line-height:16px;color:#f7f7f7;-webkit-text-stroke:0">Linux Howto's Guide</div>
</body></html>
